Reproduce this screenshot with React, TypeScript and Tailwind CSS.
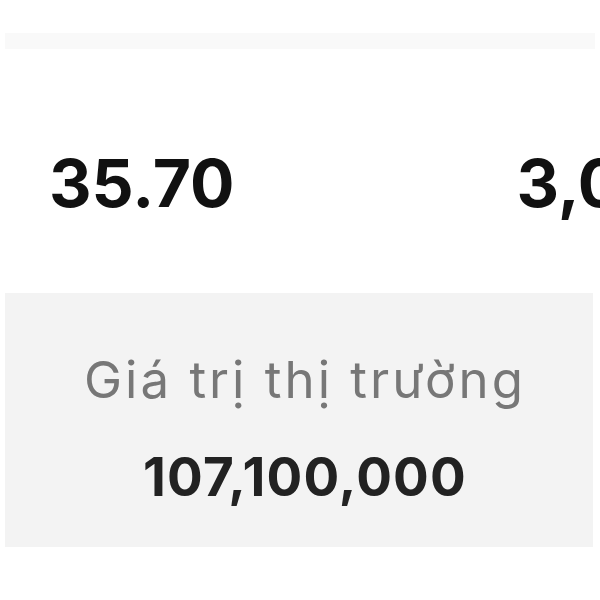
import React from "react";

export default function App() {
  return (
    <div className="w-[600px] h-[600px] overflow-hidden bg-white font-['Inter',sans-serif]">
      {/* faint header strip */}
      <div className="h-[33px]" />
      <div className="mx-[5px] h-[16px] bg-[#f9f9f9]" />

      {/* numbers row */}
      <div className="flex h-[244px] items-center whitespace-nowrap pt-[25px]">
        <span className="pl-[49px] text-[66px] font-bold text-[#111]">35.70</span>
        <span className="pl-[282px] text-[66px] font-bold text-[#111]">3,060</span>
      </div>

      {/* market value card */}
      <div className="mx-[5px] mr-[7px] flex h-[254px] flex-col items-center bg-[#f3f3f3] pl-[12px] pt-[57px]">
        <span className="text-[51px] leading-[60px] tracking-[3px] text-[#777]">Giá trị thị trường</span>
        <span className="mt-[37px] text-[53px] leading-[60px] font-bold tracking-[1.2px] text-[#222]">107,100,000</span>
      </div>
    </div>
  );
}
